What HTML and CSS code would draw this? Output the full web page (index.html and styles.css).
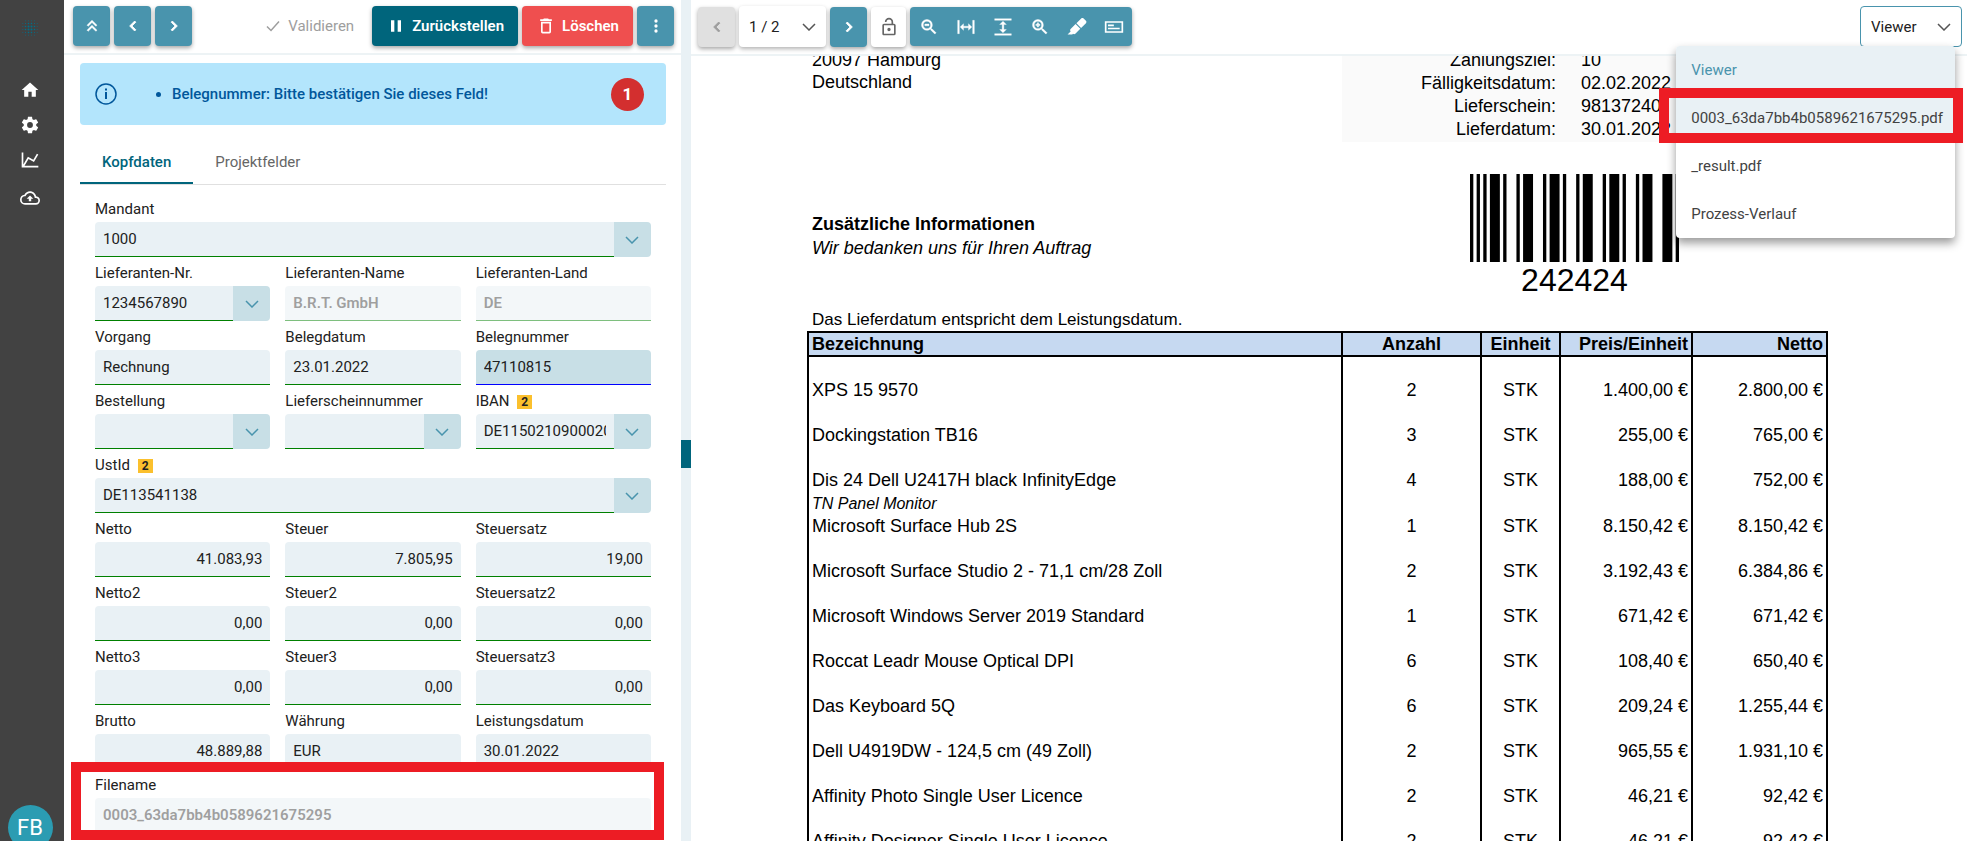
FILE: index.html
```html
<!DOCTYPE html>
<html lang="de">
<head>
<meta charset="utf-8">
<meta name="viewport" content="width=device-width, initial-scale=1">
<title>Belegprüfung</title>
<link rel="stylesheet" href="styles.css">
</head>
<body>
<svg class="sprite" aria-hidden="true">
  <symbol id="i-down" viewBox="0 0 14 8"><path d="M1 1l6 6 6-6" fill="none" stroke="currentColor" stroke-width="1.5"/></symbol>
  <symbol id="i-left" viewBox="0 0 24 24"><path d="M15.41 16.58L10.83 12l4.58-4.59L14 6l-6 6 6 6z" stroke="currentColor"/></symbol>
  <symbol id="i-right" viewBox="0 0 24 24"><path d="M8.59 16.58L13.17 12 8.59 7.41 10 6l6 6-6 6z" stroke="currentColor"/></symbol>
</svg>
<div class="app">
  <nav class="sidebar" aria-label="Hauptmenü">
    <svg class="logo" viewBox="0 0 16 16" aria-label="Logo">
      <g fill="none" stroke="#00708a" stroke-linecap="round">
        <path d="M3.500 3.500h9.100M3.500 6.500h9.100M3.500 9.500h9.100M3.500 12.500h9.100" stroke-width="1.200" stroke-dasharray="0 3"/>
        <path d="M6.500 6.500h3.100M6.500 9.500h3.100" stroke-width="2" stroke-dasharray="0 3"/>
        <path d="M6.500 3.500h3.100M6.500 12.500h3.100M3.500 6.500v3.100M12.500 6.500v3.100" stroke-width="1.600" stroke-dasharray="0 3"/>
        <path d="M3.500 .8h9.100M3.500 15.200h9.100M.8 3.500v9.100M15.200 3.500v9.100" stroke-width=".8" stroke-dasharray="0 3"/>
      </g>
    </svg>
    <div class="menu-group">
      <a href="#home" aria-label="Start"><svg class="icon" viewBox="0 0 24 24"><path d="M10,20V14H14V20H19V12H22L12,3L2,12H5V20H10Z"/></svg></a>
      <a href="#settings" aria-label="Einstellungen"><svg class="icon" viewBox="0 0 24 24"><path d="M12,15.5A3.5,3.5 0 0,1 8.5,12A3.5,3.5 0 0,1 12,8.5A3.5,3.5 0 0,1 15.5,12A3.5,3.5 0 0,1 12,15.5M19.43,12.97C19.47,12.65 19.5,12.33 19.5,12C19.5,11.67 19.47,11.34 19.43,11L21.54,9.37C21.73,9.22 21.78,8.95 21.66,8.73L19.66,5.27C19.54,5.05 19.27,4.96 19.05,5.05L16.56,6.05C16.04,5.66 15.5,5.32 14.87,5.07L14.5,2.42C14.46,2.18 14.25,2 14,2H10C9.75,2 9.54,2.18 9.5,2.42L9.13,5.07C8.5,5.32 7.96,5.66 7.44,6.05L4.95,5.05C4.73,4.96 4.46,5.05 4.34,5.27L2.34,8.73C2.21,8.95 2.27,9.22 2.46,9.37L4.57,11C4.53,11.34 4.5,11.67 4.5,12C4.5,12.33 4.53,12.65 4.57,12.97L2.46,14.63C2.27,14.78 2.21,15.05 2.34,15.27L4.34,18.73C4.46,18.95 4.73,19.03 4.95,18.95L7.44,17.94C7.96,18.34 8.5,18.68 9.13,18.93L9.5,21.58C9.54,21.82 9.75,22 10,22H14C14.25,22 14.46,21.82 14.5,21.58L14.87,18.93C15.5,18.67 16.04,18.34 16.56,17.94L19.05,18.95C19.27,19.03 19.54,18.95 19.66,18.73L21.66,15.27C21.78,15.05 21.73,14.78 21.54,14.63L19.43,12.97Z"/></svg></a>
      <a href="#stats" aria-label="Statistik"><svg class="icon" viewBox="0 0 24 24"><path d="M16,11.78L20.24,4.45L21.97,5.45L16.74,14.5L10.23,10.75L5.46,19H22V21H2V3H4V17.54L9.5,8L16,11.78Z"/></svg></a>
    </div>
    <div class="menu-group">
      <a href="#upload" aria-label="Hochladen"><svg class="icon" viewBox="0 0 24 24"><path d="M19.35,10.03C18.67,6.59 15.64,4 12,4C9.11,4 6.6,5.64 5.35,8.03C2.34,8.36 0,10.9 0,14A6,6 0 0,0 6,20H19A5,5 0 0,0 24,15C24,12.36 21.95,10.22 19.35,10.03M19,18H6A4,4 0 0,1 2,14C2,11.95 3.53,10.24 5.56,10.03L6.63,9.92L7.13,8.97C8.08,7.14 9.94,6 12,6C14.62,6 16.88,7.86 17.39,10.43L17.69,11.93L19.22,12.04C20.78,12.14 22,13.45 22,15A3,3 0 0,1 19,18M8,13H10.55V16H13.45V13H16L12,9L8,13Z"/></svg></a>
    </div>
    <button class="avatar" type="button">FB</button>
  </nav>

  <main class="form-panel">
    <div class="toolbar">
      <button class="btn btn-teal" type="button" aria-label="Zur Liste"><svg class="icon" viewBox="0 0 24 24"><path d="M7.41,18.41L6,17L12,11L18,17L16.59,18.41L12,13.83L7.41,18.41M7.41,12.41L6,11L12,5L18,11L16.59,12.41L12,7.83L7.41,12.41Z" stroke="currentColor" stroke-width=".5"/></svg></button>
      <button class="btn btn-teal" type="button" aria-label="Vorheriger Beleg"><svg class="icon"><use href="#i-left"/></svg></button>
      <button class="btn btn-teal" type="button" aria-label="Nächster Beleg"><svg class="icon"><use href="#i-right"/></svg></button>
      <button class="btn-plain" type="button" disabled><svg class="icon-check" viewBox="0 0 14 12"><path d="M1 6.500l4 4L13 1.500" fill="none" stroke="currentColor" stroke-width="1.500"/></svg>Validieren</button>
      <button class="btn btn-dark" type="button"><svg class="icon" viewBox="0 0 24 24"><path d="M14,19H18V5H14M6,19H10V5H6V19Z"/></svg>Zurückstellen</button>
      <button class="btn btn-red" type="button"><svg class="icon" viewBox="0 0 24 24"><path d="M6,19A2,2 0 0,0 8,21H16A2,2 0 0,0 18,19V7H6V19M8,9H16V19H8V9M15.5,4L14.5,3H9.5L8.5,4H5V6H19V4H15.5Z"/></svg>Löschen</button>
      <button class="btn btn-teal" type="button" aria-label="Mehr"><svg class="icon" viewBox="0 0 24 24"><circle cx="12" cy="6" r="2"/><circle cx="12" cy="12" r="2"/><circle cx="12" cy="18" r="2"/></svg></button>
    </div>
    <div class="form-body">
      <div class="alert" role="alert">
        <svg class="alert-icon" viewBox="0 0 22 22"><circle cx="11" cy="11" r="10" fill="none" stroke="currentColor" stroke-width="1.500"/><path d="M10 9h2v7h-2zM10 5.500h2v2h-2z"/></svg>
        <ul class="alert-list"><li>Belegnummer: Bitte bestätigen Sie dieses Feld!</li></ul>
        <span class="count">1</span>
      </div>
      <div class="tabs" role="tablist">
        <button class="tab tab-active" type="button" role="tab" aria-selected="true">Kopfdaten</button>
        <button class="tab" type="button" role="tab" aria-selected="false">Projektfelder</button>
      </div>
      <form class="fields">
        <div class="field wide"><label for="mandant">Mandant</label><div class="combo"><input id="mandant" value="1000"><button type="button" aria-label="Mandant auswählen"><svg class="chev"><use href="#i-down"/></svg></button></div></div>

        <div class="field"><label for="liefnr">Lieferanten-Nr.</label><div class="combo"><input id="liefnr" value="1234567890"><button type="button" aria-label="Lieferant auswählen"><svg class="chev"><use href="#i-down"/></svg></button></div></div>
        <div class="field"><label for="liefname">Lieferanten-Name</label><input id="liefname" value="B.R.T. GmbH" disabled></div>
        <div class="field"><label for="liefland">Lieferanten-Land</label><input id="liefland" value="DE" disabled></div>

        <div class="field"><label for="vorgang">Vorgang</label><input id="vorgang" value="Rechnung"></div>
        <div class="field"><label for="datum">Belegdatum</label><input id="datum" value="23.01.2022"></div>
        <div class="field"><label for="nummer">Belegnummer</label><input id="nummer" class="current" value="47110815"></div>

        <div class="field"><label for="bestellung">Bestellung</label><div class="combo"><input id="bestellung"><button type="button" aria-label="Bestellung auswählen"><svg class="chev"><use href="#i-down"/></svg></button></div></div>
        <div class="field"><label for="lsnr">Lieferscheinnummer</label><div class="combo"><input id="lsnr"><button type="button" aria-label="Lieferschein auswählen"><svg class="chev"><use href="#i-down"/></svg></button></div></div>
        <div class="field"><label for="iban">IBAN <span class="hits">2</span></label><div class="combo"><input id="iban" value="DE11502109000201234567"><button type="button" aria-label="IBAN auswählen"><svg class="chev"><use href="#i-down"/></svg></button></div></div>

        <div class="field wide"><label for="ustid">UstId <span class="hits">2</span></label><div class="combo"><input id="ustid" value="DE113541138"><button type="button" aria-label="UstId auswählen"><svg class="chev"><use href="#i-down"/></svg></button></div></div>

        <div class="field"><label for="netto">Netto</label><input id="netto" class="num" value="41.083,93"></div>
        <div class="field"><label for="steuer">Steuer</label><input id="steuer" class="num" value="7.805,95"></div>
        <div class="field"><label for="satz">Steuersatz</label><input id="satz" class="num" value="19,00"></div>

        <div class="field"><label for="netto2">Netto2</label><input id="netto2" class="num" value="0,00"></div>
        <div class="field"><label for="steuer2">Steuer2</label><input id="steuer2" class="num" value="0,00"></div>
        <div class="field"><label for="satz2">Steuersatz2</label><input id="satz2" class="num" value="0,00"></div>

        <div class="field"><label for="netto3">Netto3</label><input id="netto3" class="num" value="0,00"></div>
        <div class="field"><label for="steuer3">Steuer3</label><input id="steuer3" class="num" value="0,00"></div>
        <div class="field"><label for="satz3">Steuersatz3</label><input id="satz3" class="num" value="0,00"></div>

        <div class="field"><label for="brutto">Brutto</label><input id="brutto" class="num" value="48.889,88"></div>
        <div class="field"><label for="waehrung">Währung</label><input id="waehrung" value="EUR"></div>
        <div class="field"><label for="leistung">Leistungsdatum</label><input id="leistung" value="30.01.2022"></div>

        <div class="field wide marked"><label for="filename">Filename</label><input id="filename" value="0003_63da7bb4b0589621675295" disabled></div>
      </form>
    </div>
  </main>

  <div class="splitter"><button type="button" class="handle" aria-label="Breite ändern"></button></div>

  <section class="viewer">
    <div class="toolbar viewer-bar">
      <button class="btn btn-off" type="button" disabled aria-label="Vorherige Seite"><svg class="icon"><use href="#i-left"/></svg></button>
      <div class="select page-select"><select aria-label="Seite"><option>1 / 2</option><option>2 / 2</option></select><svg class="chev"><use href="#i-down"/></svg></div>
      <button class="btn btn-teal" type="button" aria-label="Nächste Seite"><svg class="icon"><use href="#i-right"/></svg></button>
      <button class="btn btn-white" type="button" aria-label="Sperren"><svg class="icon" viewBox="0 0 24 24"><path d="M18,20V10H6V20H18M18,8A2,2 0 0,1 20,10V20A2,2 0 0,1 18,22H6C4.89,22 4,21.1 4,20V10A2,2 0 0,1 6,8H15V6A3,3 0 0,0 12,3A3,3 0 0,0 9,6H7A5,5 0 0,1 12,1A5,5 0 0,1 17,6V8H18M12,17A2,2 0 1,1 14,15A2,2 0 0,1 12,17Z"/></svg></button>
      <div class="tools">
        <button type="button" aria-label="Verkleinern"><svg class="icon" viewBox="0 0 24 24"><path d="M15.5,14H14.71L14.43,13.73C15.41,12.59 16,11.11 16,9.5A6.5,6.5 0 0,0 9.5,3A6.5,6.5 0 0,0 3,9.5A6.5,6.5 0 0,0 9.5,16C11.11,16 12.59,15.41 13.73,14.43L14,14.71V15.5L19,20.5L20.5,19L15.5,14M9.5,14C7,14 5,12 5,9.5C5,7 7,5 9.5,5C12,5 14,7 14,9.5C14,12 12,14 9.5,14M7,8.5H12V10.5H7Z" stroke="currentColor" stroke-width=".5"/></svg></button>
        <button type="button" aria-label="Seitenbreite"><svg class="icon" viewBox="0 0 24 24"><path d="M9,11H15V8L19,12L15,16V13H9V16L5,12L9,8V11M2,20V4H4V20H2M20,20V4H22V20H20Z" stroke="currentColor" stroke-width=".4"/></svg></button>
        <button type="button" aria-label="Seitenhöhe"><svg class="icon" viewBox="0 0 24 24"><path d="M13,9V15H16L12,19L8,15H11V9H8L12,5L16,9H13M2,2H22V4H2V2M2,20H22V22H2V20Z" stroke="currentColor" stroke-width=".4"/></svg></button>
        <button type="button" aria-label="Vergrößern"><svg class="icon" viewBox="0 0 24 24"><path d="M15.5,14L20.5,19L19,20.5L14,15.5V14.71L13.73,14.43C12.59,15.41 11.11,16 9.5,16A6.5,6.5 0 0,1 3,9.5A6.5,6.5 0 0,1 9.5,3A6.5,6.5 0 0,1 16,9.5C16,11.11 15.41,12.59 14.43,13.73L14.71,14H15.5M9.5,14C12,14 14,12 14,9.5C14,7 12,5 9.5,5C7,5 5,7 5,9.5C5,12 7,14 9.5,14M12,10.3H10.3V12H8.7V10.3H7V8.700H8.700V7H10.300V8.700H12V10.300Z" stroke="currentColor" stroke-width=".5"/></svg></button>
        <button type="button" aria-label="Markieren"><svg class="icon" viewBox="0 0 24 24"><path d="M18.5,1.15C17.97,1.15 17.46,1.34 17.07,1.73L11.26,7.55L16.91,13.2L22.73,7.39C23.5,6.61 23.5,5.35 22.73,4.56L19.89,1.73C19.5,1.34 19,1.15 18.5,1.15M10.3,8.5L4.34,14.46C3.56,15.24 3.56,16.5 4.36,17.31C3.14,18.54 1.9,19.77 .67,21H6.33L7.19,20.14C7.97,20.9 9.22,20.89 10,20.12L15.95,14.16"/></svg></button>
        <button type="button" aria-label="Textfelder"><svg class="icon" viewBox="0 0 24 24"><path fill-rule="evenodd" d="M1 5h22v14H1zM3 7v10h18V7zM4.800 9h7v2h-7zM4.800 13h14v1.800h-14z"/></svg></button>
      </div>
      <div class="view-switch">
        <div class="select view-select"><select aria-label="Ansicht"><option>Viewer</option></select><svg class="chev"><use href="#i-down"/></svg></div>
        <ul class="dropdown" role="listbox" aria-label="Ansicht">
          <li class="option chosen" role="option" aria-selected="true">Viewer</li>
          <li class="option hovered marked" role="option">0003_63da7bb4b0589621675295.pdf</li>
          <li class="option" role="option">_result.pdf</li>
          <li class="option" role="option">Prozess-Verlauf</li>
        </ul>
      </div>
    </div>
    <div class="canvas">
      <article class="sheet">
        <div class="head">
          <address class="address">20097 Hamburg<br>Deutschland</address>
          <dl class="meta">
            <dt>Zahlungsziel:</dt><dd>10</dd>
            <dt>Fälligkeitsdatum:</dt><dd>02.02.2022</dd>
            <dt>Lieferschein:</dt><dd>98137240</dd>
            <dt>Lieferdatum:</dt><dd>30.01.2022</dd>
          </dl>
        </div>
        <div class="head">
          <div class="note"><strong>Zusätzliche Informationen</strong><br><em>Wir bedanken uns für Ihren Auftrag</em></div>
          <figure class="barcode">
            <svg viewBox="0 0 63 88" preserveAspectRatio="none" aria-hidden="true"><path d="M0 0h1v88H0zM2 0h1v88H2zM4 0h1v88H4zM6 0h3v88H6zM10 0h1v88h-1zM14 0h1v88h-1zM16 0h3v88h-3zM22 0h1v88h-1zM24 0h3v88h-3zM28 0h1v88h-1zM32 0h1v88h-1zM34 0h3v88h-3zM40 0h1v88h-1zM42 0h3v88h-3zM46 0h1v88h-1zM50 0h1v88h-1zM52 0h3v88h-3zM58 0h3v88h-3zM62 0h1v88h-1z"/></svg>
            <figcaption>242424</figcaption>
          </figure>
        </div>
        <p class="hint">Das Lieferdatum entspricht dem Leistungsdatum.</p>
        <table class="items">
          <colgroup><col><col class="c-qty"><col class="c-unit"><col class="c-price"><col class="c-net"></colgroup>
          <thead><tr><th>Bezeichnung</th><th>Anzahl</th><th>Einheit</th><th>Preis/Einheit</th><th>Netto</th></tr></thead>
          <tbody>
            <tr><td>XPS 15 9570</td><td>2</td><td>STK</td><td>1.400,00 €</td><td>2.800,00 €</td></tr>
            <tr><td>Dockingstation TB16</td><td>3</td><td>STK</td><td>255,00 €</td><td>765,00 €</td></tr>
            <tr><td>Dis 24 Dell U2417H black InfinityEdge<div class="sub">TN Panel Monitor</div></td><td>4</td><td>STK</td><td>188,00 €</td><td>752,00 €</td></tr>
            <tr class="tight"><td>Microsoft Surface Hub 2S</td><td>1</td><td>STK</td><td>8.150,42 €</td><td>8.150,42 €</td></tr>
            <tr><td>Microsoft Surface Studio 2 - 71,1 cm/28 Zoll</td><td>2</td><td>STK</td><td>3.192,43 €</td><td>6.384,86 €</td></tr>
            <tr><td>Microsoft Windows Server 2019 Standard</td><td>1</td><td>STK</td><td>671,42 €</td><td>671,42 €</td></tr>
            <tr><td>Roccat Leadr Mouse Optical DPI</td><td>6</td><td>STK</td><td>108,40 €</td><td>650,40 €</td></tr>
            <tr><td>Das Keyboard 5Q</td><td>6</td><td>STK</td><td>209,24 €</td><td>1.255,44 €</td></tr>
            <tr><td>Dell U4919DW - 124,5 cm (49 Zoll)</td><td>2</td><td>STK</td><td>965,55 €</td><td>1.931,10 €</td></tr>
            <tr><td>Affinity Photo Single User Licence</td><td>2</td><td>STK</td><td>46,21 €</td><td>92,42 €</td></tr>
            <tr><td>Affinity Designer Single User Licence</td><td>2</td><td>STK</td><td>46,21 €</td><td>92,42 €</td></tr>
          </tbody>
        </table>
      </article>
    </div>
  </section>
</div>
</body>
</html>
```

FILE: styles.css
```css
* { box-sizing: border-box; }

body {
  margin: 0;
  font: 15px/20px Roboto, "Liberation Sans", sans-serif;
  color: #212121;
  background: #fff;
}

button, input, select { font: inherit; color: inherit; margin: 0; }
button { border: 0; padding: 0; background: none; }
ul, dl, p, figure { margin: 0; padding: 0; }

.sprite { display: none; }
.icon { width: 20px; height: 20px; fill: currentColor; flex: none; }
.chev { width: 14px; height: 8px; flex: none; }

.app {
  display: grid;
  grid-template-columns: 64px minmax(0, 617fr) 10px minmax(0, 1276fr);
  height: 100vh;
  overflow: hidden;
}

/* Sidebar */
.sidebar {
  display: flex;
  flex-direction: column;
  align-items: center;
  gap: 18px;
  min-height: 0;
  padding: 20px 4px 0 0;
  background: #424242;
  color: #fff;
}
.logo { width: 16px; height: 16px; margin-bottom: 26px; flex: none; }
.menu-group { display: flex; flex-direction: column; gap: 15px; }
.menu-group a { display: flex; color: inherit; }
.avatar {
  flex: none;
  width: 45px;
  height: 45px;
  margin: auto 0 -9px;
  border-radius: 50%;
  background: #2b9cb2;
  color: #fff;
  font-size: 22px;
}

/* Toolbars */
.toolbar {
  display: flex;
  align-items: center;
  gap: 4px;
  flex: none;
  height: 55px;
  padding: 0 7px 1px 9px;
  border-bottom: 2px solid #edf3f5;
}
.btn {
  display: flex;
  align-items: center;
  justify-content: center;
  gap: 6px;
  flex: none;
  min-width: 37px;
  height: 40px;
  border-radius: 4px;
  font-weight: 600;
  color: #fff;
  box-shadow: 0 2px 4px rgba(0, 0, 0, .35);
}
.btn-teal { background: #4994ad; }
.btn-dark { background: #00657c; padding: 0 14px; }
.btn-red { background: #ef4f4f; padding: 0 14px; }
.btn-off { background: #e0e0e0; color: #9e9e9e; }
.btn-white { min-width: 35px; background: #fff; color: #666; }
.btn-plain {
  display: flex;
  align-items: center;
  gap: 8px;
  margin: 0 14px 0 auto;
  color: #9e9e9e;
}
.icon-check { width: 14px; height: 12px; }

/* Form panel */
.form-panel, .viewer { display: flex; flex-direction: column; min-width: 0; min-height: 0; }
.form-body { flex: 1; min-height: 0; overflow: hidden; padding: 8px 15px 0 16px; }
.alert {
  display: flex;
  align-items: center;
  gap: 37px;
  height: 62px;
  padding: 0 22px 0 15px;
  border-radius: 4px;
  background: #b3e5fc;
  color: #01579b;
  font-weight: 500;
}
.alert-icon { width: 22px; height: 22px; fill: currentColor; flex: none; }
.alert-list { flex: 1; padding-left: 18px; }
.count {
  width: 33px;
  border-radius: 50%;
  background: #d32f2f;
  color: #fff;
  font-size: 17px;
  font-weight: 700;
  line-height: 33px;
  text-align: center;
}
.tabs { display: flex; margin-top: 12px; border-bottom: 1px solid #e0e0e0; }
.tab {
  height: 47px;
  padding: 4px 22px 0;
  border-bottom: 2px solid transparent;
  color: #666;
}
.tab-active { border-color: #00657c; color: #00657c; font-weight: 500; }

.fields {
  display: grid;
  grid-template-columns: repeat(3, minmax(0, 1fr));
  column-gap: 15px;
  padding: 8px 15px 0;
}
.field { position: relative; }
.wide { grid-column: 1 / -1; }
.field label { display: block; padding: 6px 0 3px; }
.field input {
  display: block;
  width: 100%;
  height: 35px;
  min-width: 0;
  padding: 0 8px 1px;
  border: 0;
  border-bottom: 1px solid #008000;
  border-radius: 4px 4px 0 0;
  outline: 0;
  background: #e9f1f5;
}
.field input:disabled { opacity: .5; color: #424242; font-weight: 600; }
.field .current { background: #c8dfe6; border-color: #00f; }
.field .num { text-align: right; }
.combo { display: flex; }
.field .combo input { flex: 1; border-radius: 4px 0 0; }
.combo button {
  display: flex;
  align-items: center;
  justify-content: center;
  width: 37px;
  border-radius: 0 4px 4px 0;
  background: #c8dfe6;
  color: #4994ad;
}
.hits {
  display: inline-block;
  width: 15px;
  margin-left: 4px;
  background: #fbc02d;
  font-size: 12px;
  font-weight: 700;
  line-height: 14px;
  text-align: center;
}

/* Red highlight frames */
.marked::after {
  content: "";
  position: absolute;
  z-index: 2;
  border: 10px solid #ed1c24;
  pointer-events: none;
}
.field.marked::after { inset: -7px -13px -7px -24px; }
.option.marked::after { inset: -6px -8px -1px -17px; }

/* Splitter */
.splitter {
  display: flex;
  align-items: center;
  padding-top: 66px;
  background: #e9f1f5;
}
.handle { width: 100%; height: 28px; background: #00657c; }

/* Viewer */
.viewer-bar { height: 56px; padding: 0 5px 1px 7px; position: relative; z-index: 1; }
.select {
  display: flex;
  align-items: center;
  position: relative;
  height: 41px;
  border-radius: 4px;
  background: #fff;
}
.select select {
  width: 100%;
  height: 100%;
  padding: 0 10px;
  border: 0;
  outline: 0;
  background: none;
  appearance: none;
}
.select .chev { position: absolute; right: 10px; pointer-events: none; color: #555; }
.page-select { width: 87px; box-shadow: 0 2px 4px rgba(0, 0, 0, .3); }
.view-select { width: 102px; border: 1px solid #4994ad; }
.tools {
  display: flex;
  height: 39px;
  border-radius: 4px;
  background: #4994ad;
  color: #fff;
  box-shadow: 0 2px 4px rgba(0, 0, 0, .35);
}
.tools button { display: flex; align-items: center; justify-content: center; width: 37px; }
.view-switch { position: relative; margin-left: auto; }
.dropdown {
  position: absolute;
  top: 40px;
  right: 7px;
  list-style: none;
  border-radius: 4px;
  background: #fff;
  box-shadow: 0 5px 10px rgba(0, 0, 0, .4);
}
.option {
  position: relative;
  padding: 0 12px 0 15px;
  line-height: 48px;
  white-space: nowrap;
  color: #424242;
}
.chosen, .hovered { background: #e9f1f5; }
.chosen { color: #4994ad; border-radius: 4px 4px 0 0; }

/* Invoice sheet */
.canvas { flex: 1; min-height: 0; overflow: hidden; }
.sheet {
  margin: -7px 139px 0 116px;
  font: 18px/23px "Liberation Sans", Arial, sans-serif;
  color: #000;
}
.head { display: grid; grid-template-columns: minmax(0, 1fr) 486px; }
.address { padding-left: 5px; font-style: normal; line-height: 22px; }
.meta {
  display: grid;
  grid-template-columns: 214px 1fr;
  column-gap: 25px;
  padding-bottom: 1px;
  background: #fafafa;
}
.meta dt { text-align: right; }
.meta dd { margin: 0; }
.note { padding: 70px 0 0 5px; line-height: 24px; }
.barcode { width: 209px; margin: 32px 0 0 128px; }
.barcode svg { display: block; width: 100%; height: 88px; }
.barcode figcaption { font-size: 32px; line-height: 36px; text-align: center; }
.hint { padding: 10px 0 0 5px; font-size: 17px; }
.items { width: 100%; table-layout: fixed; border-collapse: collapse; }
.c-qty { width: 139px; }
.c-unit { width: 79px; }
.c-price { width: 132px; }
.c-net { width: 135px; }
.items th, .items td {
  padding: 0 3px;
  border: 1px solid #000;
  border-width: 0 2px;
  text-align: center;
  vertical-align: top;
}
.items th { border-width: 2px; background: #c6d9f1; line-height: 22px; }
.items td { padding-top: 22px; }
.items .tight td { padding-top: 0; }
.items th:first-child, .items td:first-child { text-align: left; }
.items th:nth-child(n+4), .items td:nth-child(n+4) { text-align: right; }
.sub { font-size: 16px; font-style: italic; }
```
